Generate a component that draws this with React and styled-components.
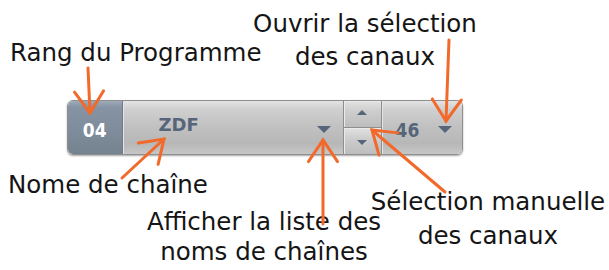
import styled, { createGlobalStyle } from "styled-components";

const GlobalStyle = createGlobalStyle`
  html, body {
    margin: 0;
    padding: 0;
    background: #ffffff;
  }
  body {
    font-family: "DejaVu Sans", "Liberation Sans", sans-serif;
  }
`;

const Canvas = styled.div`
  position: relative;
  width: 609px;
  height: 270px;
  overflow: hidden;
  background: #ffffff;
  padding: 100px 0 0 67px;
  box-sizing: border-box;
`;

const Bar = styled.div`
  display: flex;
  width: 396px;
  height: 55px;
  box-sizing: border-box;
  border: 1px solid #8f8f8f;
  border-radius: 6px;
  overflow: hidden;
  box-shadow: 0 1px 2px rgba(0, 0, 0, 0.35);
  font-family: "DejaVu Sans", "Liberation Sans", sans-serif;
  font-weight: bold;
`;

const Rank = styled.div`
  width: 55px;
  display: flex;
  align-items: center;
  justify-content: center;
  padding-top: 4px;
  box-sizing: border-box;
  color: #ffffff;
  font-family: "DejaVu Sans Condensed", "DejaVu Sans", sans-serif;
  font-size: 19px;
  background: linear-gradient(#9eabb8 0%, #8593a3 12%, #7e8c9c 55%, #75838f 100%);
  border-right: 1px solid #6f7d8b;
`;

const Section = styled.div`
  display: flex;
  align-items: center;
  box-sizing: border-box;
  width: ${(p) => p.w}px;
  padding: ${(p) => p.pad};
  background: linear-gradient(#e4e4e4 0%, #d0d0d0 15%, #c0c0c0 50%, #b7b7b7 80%, #c7c7c7 100%);
  border-right: ${(p) => (p.last ? "none" : "1px solid #8e8e8e")};
  box-shadow: inset 1px 0 0 #e4e4e4;
  color: #56657a;
`;

const Name = styled.span`
  font-size: 18px;
  flex: 1;
  margin-top: -7px;
`;

const Number = styled.span`
  font-family: "DejaVu Sans Condensed", "DejaVu Sans", sans-serif;
  font-size: 19px;
  margin-top: 4px;
  flex: 1;
`;

const Spin = styled.div`
  width: 37px;
  display: flex;
  flex-direction: column;
  border-right: 1px solid #8e8e8e;
`;

const SpinButton = styled.div`
  flex: 1;
  display: flex;
  align-items: center;
  justify-content: center;
  background: linear-gradient(#e2e2e2 0%, #cdcdcd 40%, #bdbdbd 100%);
  border-bottom: ${(p) => (p.top ? "1px solid #8e8e8e" : "none")};
  box-shadow: inset 1px 1px 0 #ebebeb;
`;

const Triangle = styled.span`
  width: 0;
  height: 0;
  border-left: ${(p) => p.w / 2}px solid transparent;
  border-right: ${(p) => p.w / 2}px solid transparent;
  ${(p) => (p.up ? "border-bottom" : "border-top")}: ${(p) => p.h}px solid #56657a;
  margin-top: ${(p) => p.dy || 0}px;
`;

const Label = styled.div`
  position: absolute;
  left: ${(p) => p.x}px;
  top: ${(p) => p.y}px;
  width: ${(p) => p.w}px;
  text-align: ${(p) => p.align || "left"};
  font-family: "DejaVu Sans", "Liberation Sans", sans-serif;
  font-size: 24.5px;
  line-height: ${(p) => p.lh || 30}px;
  color: #151515;
  white-space: nowrap;
`;

const Overlay = styled.svg`
  position: absolute;
  left: 0;
  top: 0;
  pointer-events: none;
`;

const arrows = [
  { from: [88, 68], to: [90, 113] },
  { from: [449, 40], to: [446, 121] },
  { from: [122, 178], to: [164, 139] },
  { from: [323, 224], to: [323, 140] },
  { from: [445, 192], to: [372, 130] },
];

const armLen = 26;
const armAngle = (34 * Math.PI) / 180;

function arms(from, to) {
  const back = Math.atan2(from[1] - to[1], from[0] - to[0]);
  return [back - armAngle, back + armAngle].map((a) => [
    to[0] + Math.cos(a) * armLen,
    to[1] + Math.sin(a) * armLen,
  ]);
}

const App = () => {
  return (
    <>
      <GlobalStyle />
      <Canvas>
        <Bar>
          <Rank>04</Rank>
          <Section w={223} pad="0 12px 0 36px">
            <Name>ZDF</Name>
            <Triangle w={14} h={7} dy={3} />
          </Section>
          <Spin>
            <SpinButton top>
              <Triangle up w={10} h={5} dy={-3} />
            </SpinButton>
            <SpinButton>
              <Triangle w={10} h={5} dy={3} />
            </SpinButton>
          </Spin>
          <Section w={81} pad="0 10px 0 14px" last>
            <Number>46</Number>
            <Triangle w={14} h={7} dy={3} />
          </Section>
        </Bar>

        <Label x={10} y={38}>Rang du Programme</Label>
        <Label x={245} y={7} w={240} align="center" lh={33}>
          Ouvrir la sélection
          <br />
          des canaux
        </Label>
        <Label x={8} y={170}>Nome de chaîne</Label>
        <Label x={144} y={207} w={240} align="center" lh={30}>
          Afficher la liste des
          <br />
          noms de chaînes
        </Label>
        <Label x={366} y={185} w={244} align="center" lh={34}>
          Sélection manuelle
          <br />
          des canaux
        </Label>

        <Overlay width="609" height="270" viewBox="0 0 609 270">
          {arrows.map((a, i) => {
            const [l, r] = arms(a.from, a.to);
            return (
              <g key={i} stroke="#f26a2b" strokeWidth="3" strokeLinecap="round" fill="none">
                <line x1={a.from[0]} y1={a.from[1]} x2={a.to[0]} y2={a.to[1]} />
                <polyline points={`${l[0]},${l[1]} ${a.to[0]},${a.to[1]} ${r[0]},${r[1]}`} />
              </g>
            );
          })}
        </Overlay>
      </Canvas>
    </>
  );
};

export default App;
